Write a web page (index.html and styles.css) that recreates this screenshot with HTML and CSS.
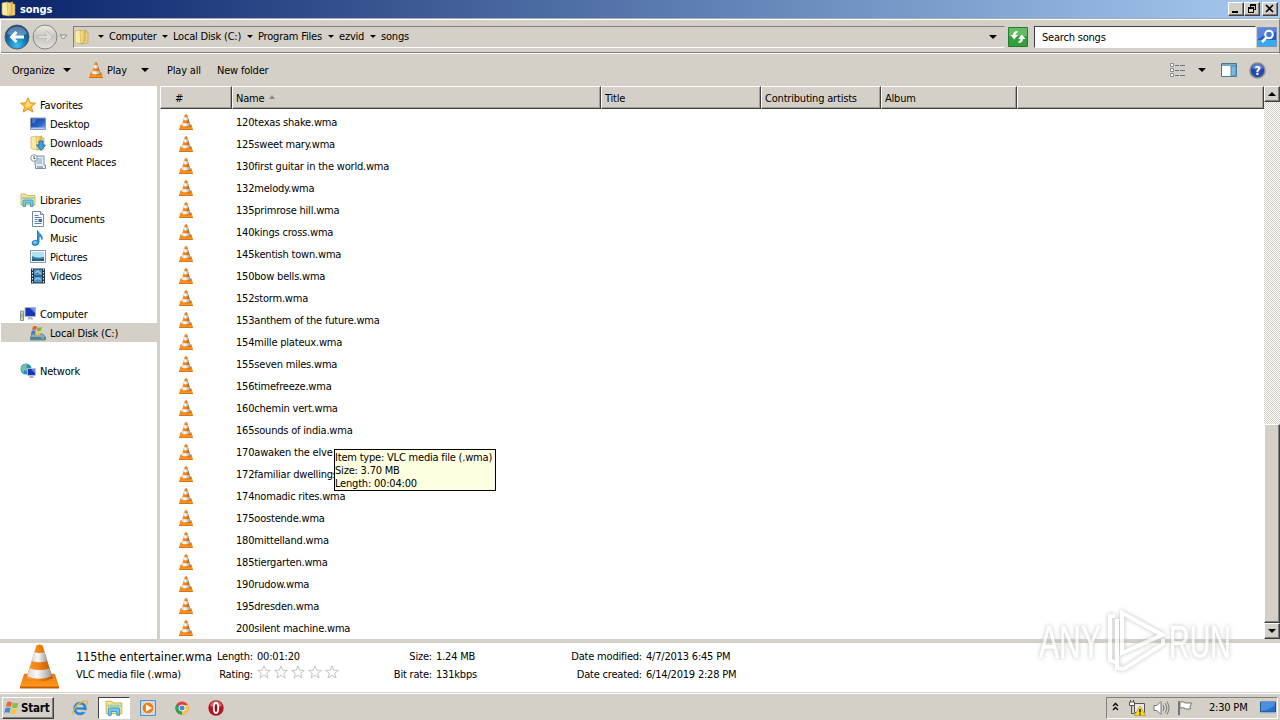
FILE: index.html
```html
<!DOCTYPE html>
<html lang="en">
<head>
<meta charset="utf-8">
<title>songs</title>
<link rel="stylesheet" href="styles.css">
</head>
<body>
<svg class="defs" aria-hidden="true">
  <defs>
    <linearGradient id="gCone" x1="0" x2="1"><stop offset="0" stop-color="#f79a3a"/><stop offset=".45" stop-color="#f58410"/><stop offset="1" stop-color="#b85206"/></linearGradient>
    <linearGradient id="gSlab" x1="0" x2="0" y2="1"><stop offset="0" stop-color="#e8780e"/><stop offset="1" stop-color="#ff9d1c"/></linearGradient>
    <linearGradient id="gWhite" x1="0" x2="1"><stop offset="0" stop-color="#d8d8d8"/><stop offset=".4" stop-color="#fafafa"/><stop offset="1" stop-color="#989898"/></linearGradient>
    <linearGradient id="gFolder" x1="0" x2="1"><stop offset="0" stop-color="#f8e894"/><stop offset="1" stop-color="#dcb550"/></linearGradient>
    <linearGradient id="gScreen" x1="0" x2="1" y2="1"><stop offset="0" stop-color="#1a3fa0"/><stop offset=".6" stop-color="#2a62c8"/><stop offset="1" stop-color="#7db4ee"/></linearGradient>
    <radialGradient id="gBack" cx=".5" cy=".85" r=".8"><stop offset="0" stop-color="#3bc3f2"/><stop offset=".5" stop-color="#1675b5"/><stop offset="1" stop-color="#123f78"/></radialGradient>
    <linearGradient id="gFwd" x2="0" y2="1"><stop offset="0" stop-color="#eceae6"/><stop offset=".5" stop-color="#c9c6c0"/><stop offset="1" stop-color="#e4e2de"/></linearGradient>
    <symbol id="cone" viewBox="0 0 38 44">
      <path d="M4 29h30l4 12v2H0v-2z" fill="url(#gSlab)"/><path d="M0 41.500h38v2H0z" fill="#c95b00"/>
      <path d="M16 1.500q3-2 6 0l10 32q-13 6-26 0z" fill="url(#gCone)"/>
      <path d="M13.900 8q5 1.500 10.200 0l2.600 8.500q-7.500 2.500-15.400 0z" fill="url(#gWhite)"/>
      <path d="M9.300 24q9.700 3 19.400 0l2.300 7.500q-12 5-24 0z" fill="url(#gWhite)"/>
    </symbol>
    <symbol id="folder" viewBox="0 0 16 16">
      <path d="M1 2l5-1 2 1v13l-6-1-1-1z" fill="#f9eca5" stroke="#c9a347" stroke-width=".6"/>
      <path d="M6 2l6-1v11l-5 3z" fill="url(#gFolder)" stroke="#c39d3e" stroke-width=".5"/><path d="M11 3h3v11l-6 1 3-3z" fill="#ecd27a" stroke="#b99334" stroke-width=".5"/>
    </symbol>
    <symbol id="star" viewBox="0 0 16 16"><path d="M8 .8l2.200 5 5.300.4-4 3.500 1.300 5.300L8 12.200 3.200 15l1.300-5.300-4-3.500 5.300-.4z" fill="#ffc037" stroke="#e5902a"/><path d="M8 3l1.400 3.800 2.600.3-3 2.400-4 .5 1-3z" fill="#ffe07a"/></symbol>
    <symbol id="desktop" viewBox="0 0 16 14"><path d="M.5 1h15v11.500H.5z" fill="url(#gScreen)" stroke="#8a9bb8"/><path d="M1 10.500h14V12H1z" fill="#b6cbe4"/><path d="M2 3h4M2 5h3" stroke="#6ea0e8"/></symbol>
    <symbol id="library" viewBox="0 0 16 16"><path d="M1 2h5l1 1.500h8V13H1z" fill="#f6e591" stroke="#cba84a" stroke-width=".8"/><path d="M2 5h13v2H2z" fill="#9ccfb3"/><path d="M3 14.500V9q0-1 1-1h8q1 0 1 1v5.500h-2.500V11h-5v3.500z" fill="#75c8ee" stroke="#2a91c8" stroke-width=".8"/></symbol>
    <symbol id="download" viewBox="0 0 16 16"><use href="#folder"/><path d="M9 6h4v4h2.500L11 15.500 6.500 10H9z" fill="#3aa0e4" stroke="#1766ad" stroke-width=".8"/></symbol>
    <symbol id="recent" viewBox="0 0 16 16"><path d="M5 2h9v9h1.500v3.500h-10V11H5z" fill="#e5edf2" stroke="#7d909e"/><path d="M6.500 5H12M6.500 7H12M6.500 9H12" stroke="#79a3c4"/><circle cx="4" cy="4" r="3.300" fill="#fff" stroke="#8397a5"/><path d="M4 2v2.500h1.500" fill="none" stroke="#456"/><path d="M7 12h6v2H7z" fill="#9db4c4"/></symbol>
    <symbol id="document" viewBox="0 0 16 16"><path d="M2.500.5h8l3 3v12h-11z" fill="#fff" stroke="#718aa5"/><path d="M10.500.5v3h3" fill="#cfdcea" stroke="#718aa5"/><path d="M4.500 4.500h4m-4 2h7m-7 2h3m-3 2h3m-3 2h7" stroke="#5d82ab"/><path d="M8.500 8h3.500v3H8.500z" fill="#3770a8"/></symbol>
    <symbol id="music" viewBox="0 0 16 16"><path d="M7.500.5c1 3 5.500 4 4.500 9-.5-3-2-3.500-3-3.500v6q0 3-3.500 3.500Q2 15.500 2 13t3.500-2.500q1 0 2 .5z" fill="#349fdc" stroke="#1b73b4" stroke-width=".9"/><ellipse cx="5" cy="12.500" rx="1.500" ry="1" fill="#a5def8"/></symbol>
    <symbol id="picture" viewBox="0 0 16 14"><path d="M.5.5h15v12H.5z" fill="#f8fbfd" stroke="#8496a5"/><path d="M2 2h12v9H2z" fill="#aee0f6"/><path d="M2 6q5 3 12 1v4H2z" fill="#2c8297"/><path d="M2 9q6 1 12-.5V11H2z" fill="#285882"/></symbol>
    <symbol id="video" viewBox="0 0 16 16"><path d="M1 .5h14v15H1z" fill="#25333e"/><path d="M4 1.500h8v6H4zM4 8.500h8v6H4z" fill="#4794cc"/><path d="M5 5l3-2 3 3M5 12l3-2 3 2" stroke="#8cc4dc" fill="none" stroke-width="1.500"/><path d="M2.500 1v14M13.500 1v14" stroke="#e8edf0" stroke-dasharray="1.500 1.500"/></symbol>
    <symbol id="computer" viewBox="0 0 16 16"><path d="M5 1.500h10.500v9H5z" fill="#1b36b2" stroke="#a9b5c8"/><path d="M10 2h5v5z" fill="#6f8ff0"/><path d="M8 11h4l1.500 2.500h-6z" fill="#b6bbc6"/><path d="M.5 5h3v9.500h-3z" fill="#cbd8c8" stroke="#8a978c"/><path d="M1.500 7.500h1v4h-1z" fill="#5aa653"/></symbol>
    <symbol id="disk" viewBox="0 0 16 16"><path d="M2 9h11l2.500 3v3H.5v-3z" fill="#8cacbb" stroke="#527284" stroke-width=".7"/><path d="M1 12h14v2.500H1z" fill="#507e92"/><path d="M11 13h3" stroke="#82e476"/><path d="M3 1.500q2-1 4 0L6 5q-2-1-4 0z" fill="#e85e2a"/><path d="M7.700 2q2 1 4.300 0l-1 3.500q-2 1-4.300 0z" fill="#75b53b"/><path d="M1.800 5.800q2-1 4 0l-1 3.500q-2-1-4 0z" fill="#3a7cd8"/><path d="M6.500 6.300q2 1 4.300 0l-1 3.500q-2 1-4.300 0z" fill="#f7c433"/></symbol>
    <symbol id="network" viewBox="0 0 16 16"><circle cx="6" cy="6" r="5.500" fill="#2b8bc6"/><path d="M2 3q3-3 6-2L6 4l2 2-2 2-2-1v3Q1 8 1 5z" fill="#71c4a1"/><path d="M7.500 5.500h8v7h-8z" fill="#1c35b5" stroke="#c0cce0" stroke-width=".8"/><path d="M11 6h4v4z" fill="#6789ea"/><path d="M9 15h5l-1-2h-3z" fill="#a4aeb9"/></symbol>
    <symbol id="flag" viewBox="0 0 16 16"><path d="M3 2.500q2.500-2 5-.3L7 7Q4.500 5.700 1.800 7z" fill="#ef6532"/><path d="M9 2.600q2.500 1.500 5.500-.2L13.300 7.200q-3 1.700-5.300.2z" fill="#83bf42"/><path d="M1.500 8Q4 6.800 6.700 8L5.500 13Q3 11.500.2 13z" fill="#3f8be0"/><path d="M7.700 8.500q2.500 1.400 5.300-.1l-1.200 4.800q-3 1.700-5.300.2z" fill="#fac631"/></symbol>
    <symbol id="rate" viewBox="0 0 14 14"><path d="M7 .8l1.700 4.400 4.700.2-3.700 3 1.300 4.600-4-2.700L3 13l1.300-4.600-3.700-3 4.700-.2z" fill="#fff" stroke="#c4c4c4"/></symbol>
  </defs>
</svg>

<div class="screen">
  <header class="titlebar">
    <svg class="i16"><use href="#folder"/></svg>
    <span class="title">songs</span>
    <div class="winbtns">
      <span class="wb"><svg viewBox="0 0 12 10"><path d="M2 7h6v2H2z"/></svg></span><span class="wb"><svg viewBox="0 0 12 10"><path d="M4 0h6v6H8V5h1V2H5v1H4zM2 3h6v6H2zM3 5v3h4V5z" fill-rule="evenodd"/></svg></span><span class="wb close"><svg viewBox="0 0 12 10"><path d="M2 1l7 7M9 1L2 8" stroke="#000" stroke-width="1.600"/></svg></span>
    </div>
  </header>

  <nav class="navbar">
    <svg class="back" viewBox="0 0 26 26"><circle cx="13" cy="13" r="12" fill="url(#gBack)" stroke="#51606e"/><path d="M3 10Q5 2.500 13 2.500T23 10q-10 4-20 0z" fill="#fff" opacity=".3"/><path d="M5.500 13l6-6 2 2-2.500 2.500h9v3h-9l2.500 2.500-2 2z" fill="#fff"/></svg>
    <svg class="fwd" viewBox="0 0 26 26"><circle cx="13" cy="13" r="12" fill="url(#gFwd)" stroke="#888580"/><path d="M20.500 13l-6-6-2 2 2.500 2.500H6v3h9L12.500 17l2 2z" fill="#dedcd8" stroke="#b3b0aa" stroke-width=".7"/></svg>
    <svg class="recentarrow" viewBox="0 0 9 6"><path d="M1 1h7L4.500 5z" fill="#eee" stroke="#888"/></svg>
    <div class="address">
      <svg class="i16"><use href="#folder"/></svg>
      <i class="tri t0"></i><span class="c1">Computer</span>
      <i class="tri"></i><span class="c2">Local Disk (C:)</span>
      <i class="tri"></i><span class="c3">Program Files</span>
      <i class="tri"></i><span class="c4">ezvid</span>
      <i class="tri"></i><span class="c5">songs</span>
      <i class="tri big end"></i>
    </div>
    <svg class="refresh" viewBox="0 0 20 20"><path d="M.5.5h19v19H.5z" fill="#32a03b" stroke="#237a30"/><path d="M1 1h18v8H1z" fill="#70c977" opacity=".7"/><path d="M9.500 4Q5 4 5 8H2.500l3.700 4.500L10 8H7.500q0-2 2-2zM10.500 16q4.500 0 4.500-4h2.500l-3.700-4.500L10 12h2.500q0 2-2 2z" fill="#fff"/></svg>
    <div class="search">Search songs</div>
    <svg class="go" viewBox="0 0 20 20"><path d="M.5.5h19v19H.5z" fill="#2858d0" stroke="#7193bd"/><path d="M1 13h18v6H1z" fill="#38a9ee"/><path d="M1 1h18v4Q10 6 1 12z" fill="#7195ea" opacity=".7"/><circle cx="12" cy="7.500" r="3.800" fill="#4178dc" stroke="#fff" stroke-width="2"/><path d="M9 11l-4 4" stroke="#fff" stroke-width="2.500"/></svg>
  </nav>

  <div class="toolbar">
    <span class="org">Organize</span><i class="tri big"></i>
    <svg class="i16 tbcone"><use href="#cone"/></svg><span class="play">Play</span><i class="tri big pt"></i>
    <span class="all">Play all</span><span>New folder</span>
    <div class="tbright">
      <svg width="16" height="14" viewBox="0 0 16 14"><path d="M.5.500h3v3h-3zM.5 5.500h3v3h-3zM.5 10.500h3v3h-3z" fill="#fff" stroke="#868b94"/><path d="M5 2.500h4m1 0h5M5 7.500h4m1 0h5M5 12.500h4m1 0h5" stroke="#68717c"/></svg>
      <i class="tri big"></i>
      <svg width="16" height="14" viewBox="0 0 16 14"><path d="M.5.5h15v13H.5z" fill="#fff" stroke="#427496"/><path d="M1 1h14v2H1z" fill="#7baac5"/><path d="M10 3h5v10h-5z" fill="#78b9dc" stroke="#4e87a8"/></svg>
      <svg width="17" height="17" viewBox="0 0 17 17"><circle cx="8.500" cy="8.500" r="7.500" fill="#2549b1" stroke="#858c9c" stroke-width="1.500"/><path d="M3 6q2-4 5.500-4T14 6q-5 3-11 0z" fill="#8ca9eb" opacity=".6"/><text x="8.500" y="13" text-anchor="middle" class="q">?</text></svg>
    </div>
  </div>

  <main class="main">
    <aside class="tree">
      <div class="n top"><svg class="i16"><use href="#star"/></svg><span>Favorites</span></div>
      <div class="n"><svg class="i16"><use href="#desktop"/></svg><span>Desktop</span></div>
      <div class="n"><svg class="i16"><use href="#download"/></svg><span>Downloads</span></div>
      <div class="n"><svg class="i16"><use href="#recent"/></svg><span>Recent Places</span></div>
      <div class="n top gap"><svg class="i16"><use href="#library"/></svg><span>Libraries</span></div>
      <div class="n"><svg class="i16"><use href="#document"/></svg><span>Documents</span></div>
      <div class="n"><svg class="i16"><use href="#music"/></svg><span>Music</span></div>
      <div class="n"><svg class="i16"><use href="#picture"/></svg><span>Pictures</span></div>
      <div class="n"><svg class="i16"><use href="#video"/></svg><span>Videos</span></div>
      <div class="n top gap"><svg class="i16"><use href="#computer"/></svg><span>Computer</span></div>
      <div class="n sel"><svg class="i16"><use href="#disk"/></svg><span>Local Disk (C:)</span></div>
      <div class="n top gap"><svg class="i16"><use href="#network"/></svg><span>Network</span></div>
    </aside>
    <section class="list">
      <div class="head"><span class="hnum">#</span><span>Name<svg class="sort" viewBox="0 0 6 4"><path d="M0 4h6L3 0z" fill="#8c8982"/></svg></span><span>Title</span><span>Contributing artists</span><span>Album</span><span></span></div>
      <div class="rows">
        <div class="r"><svg><use href="#cone"/></svg>120texas shake.wma</div>
        <div class="r"><svg><use href="#cone"/></svg>125sweet mary.wma</div>
        <div class="r"><svg><use href="#cone"/></svg>130first guitar in the world.wma</div>
        <div class="r"><svg><use href="#cone"/></svg>132melody.wma</div>
        <div class="r"><svg><use href="#cone"/></svg>135primrose hill.wma</div>
        <div class="r"><svg><use href="#cone"/></svg>140kings cross.wma</div>
        <div class="r"><svg><use href="#cone"/></svg>145kentish town.wma</div>
        <div class="r"><svg><use href="#cone"/></svg>150bow bells.wma</div>
        <div class="r"><svg><use href="#cone"/></svg>152storm.wma</div>
        <div class="r"><svg><use href="#cone"/></svg>153anthem of the future.wma</div>
        <div class="r"><svg><use href="#cone"/></svg>154mille plateux.wma</div>
        <div class="r"><svg><use href="#cone"/></svg>155seven miles.wma</div>
        <div class="r"><svg><use href="#cone"/></svg>156timefreeze.wma</div>
        <div class="r"><svg><use href="#cone"/></svg>160chemin vert.wma</div>
        <div class="r"><svg><use href="#cone"/></svg>165sounds of india.wma</div>
        <div class="r"><svg><use href="#cone"/></svg>170awaken the elve</div>
        <div class="r"><svg><use href="#cone"/></svg>172familiar dwellings</div>
        <div class="r"><svg><use href="#cone"/></svg>174nomadic rites.wma</div>
        <div class="r"><svg><use href="#cone"/></svg>175oostende.wma</div>
        <div class="r"><svg><use href="#cone"/></svg>180mittelland.wma</div>
        <div class="r"><svg><use href="#cone"/></svg>185tiergarten.wma</div>
        <div class="r"><svg><use href="#cone"/></svg>190rudow.wma</div>
        <div class="r"><svg><use href="#cone"/></svg>195dresden.wma</div>
        <div class="r"><svg><use href="#cone"/></svg>200silent machine.wma</div>
      </div>
      <div class="tip">Item type: VLC media file (.wma)<br>Size: 3.70 MB<br>Length: 00:04:00</div>
    </section>
    <div class="scroll">
      <div class="sb"><i class="up"></i></div>
      <div class="track"></div>
      <div class="thumb"></div>
      <div class="sb"><i class="down"></i></div>
    </div>
  </main>

  <section class="details">
    <svg class="bigcone"><use href="#cone"/></svg>
    <div class="info">
      <span class="fname">115the entertainer.wma</span><span class="l">Length:</span><span>00:01:20</span><span class="l">Size:</span><span>1.24 MB</span><span class="l">Date modified:</span><span>4/7/2013 6:45 PM</span>
      <span>VLC media file (.wma)</span><span class="l">Rating:</span><span class="stars"><svg><use href="#rate"/></svg><svg><use href="#rate"/></svg><svg><use href="#rate"/></svg><svg><use href="#rate"/></svg><svg><use href="#rate"/></svg></span><span class="l">Bit rate:</span><span>131kbps</span><span class="l">Date created:</span><span>6/14/2019 2:28 PM</span>
    </div>
  </section>

  <footer class="taskbar">
    <div class="start"><svg class="i16"><use href="#flag"/></svg>Start</div>
    <div class="apps">
      <span><svg class="i16" viewBox="0 0 16 16"><circle cx="8" cy="8.500" r="5.300" fill="none" stroke="#2787d5" stroke-width="2.800"/><path d="M4 8.500h9" stroke="#2787d5" stroke-width="2.300"/><path d="M11 10.200h5v2h-5z" fill="#d4d0c8"/><path d="M2 14Q-1 14 3 8t10-7q4-1 1.500 4" fill="none" stroke="#e4b63e" stroke-width="1.300"/></svg></span>
      <span class="active"><svg class="i18"><use href="#library"/></svg></span>
      <span><svg class="i16" viewBox="0 0 16 16"><path d="M.5.5h15v15H.5z" fill="#b7dcf5" stroke="#5591c8"/><circle cx="8" cy="8" r="6" fill="#f08118" stroke="#fff4e0" stroke-width=".8"/><path d="M6 4.500v7L12 8z" fill="#fff"/></svg></span>
      <span><svg class="i14" viewBox="0 0 16 16"><circle cx="8" cy="8" r="7.500" fill="#e14236"/><path d="M8 8L1.500 4.200A7.500 7.500 0 0 0 8 15.500l3.500-6z" fill="#2fa350"/><path d="M8 8l0 7.500A7.500 7.500 0 0 0 14.700 4.600H8z" fill="#f9cd35"/><circle cx="8" cy="8" r="3.500" fill="#4585ee" stroke="#fff"/></svg></span>
      <span><svg class="i16" viewBox="0 0 16 16"><circle cx="8" cy="8" r="7.700" fill="#b51620"/><path d="M2 6q2-5 6-5t6 5q-6 2-12 0z" fill="#e66b6d"/><ellipse cx="8" cy="8" rx="2.200" ry="5" fill="#8e1119" stroke="#fff" stroke-width="1.800"/></svg></span>
    </div>
    <div class="tray">
      <svg class="chev" viewBox="0 0 7 9"><path d="M1 4l2.500-2.500L6 4M1 8l2.500-2.500L6 8" fill="none" stroke="#000" stroke-width="1.300"/></svg>
      <svg class="net" viewBox="0 0 17 16"><path d="M5.500 3.500h10v9h-10z" fill="#e9e7e2" stroke="#555"/><path d="M.5 2h5v3.500h-5z" fill="#fff" stroke="#555"/><path d="M1.500 0v2M4.500 0v2" stroke="#555"/><path d="M2.500 5.500v8h3" fill="none" stroke="#555"/><path d="M11 6l5.500 9.500h-11z" fill="#ffdc1f" stroke="#b59310" stroke-width=".7"/><path d="M11 9v3.500m0 1v1.200" stroke="#000" stroke-width="1.400"/></svg>
      <svg class="vol" viewBox="0 0 17 16"><path d="M1 5.500h3L8 1.500v13l-4-4H1z" fill="#fff" stroke="#777"/><path d="M10 5q2 3 0 6M12 3q3.500 5 0 10M14 1.500q4 6.500 0 13" fill="none" stroke="#777"/></svg>
      <svg class="act" viewBox="0 0 17 16"><path d="M2.500 1.500V15h-1V1.500zM3 2q3-1 5.500 1H15l-2 3 .5 3H9q-2.500-2-6-1z" fill="#fff" stroke="#777"/></svg>
      <span class="clock">2:30 PM</span>
      <svg class="show" viewBox="0 0 16 14"><path d="M.5 1h15v10H.5z" fill="#2770cc" stroke="#24508d"/><path d="M1 10q8-1 14-6V1H1z" fill="#4b90e0"/><path d="M0 11.500h16V13H0z" fill="#b1c7dc"/></svg>
    </div>
  </footer>

  <svg class="mark" viewBox="0 0 220 72">
    <g class="markshape">
      <text x="4" y="55" textLength="62" lengthAdjust="spacingAndGlyphs">ANY</text>
      <text x="134" y="55" textLength="62" lengthAdjust="spacingAndGlyphs">RUN</text>
      <path d="M87 10v40l40-18zM87 10l41 22M80 13h-5v44l7 3M82 16v49l7 1 39-25v-5"/>
    </g>
  </svg>
</div>
</body>
</html>
```

FILE: styles.css
```css
* { box-sizing: border-box; }
body {
  margin: 0;
  font-family: "DejaVu Sans Condensed", "DejaVu Sans", sans-serif;
  font-stretch: condensed;
  font-size: 11px;
  letter-spacing: -0.2px;
  color: #000;
  white-space: nowrap;
}
svg { display: block; flex: none; }
.defs { position: absolute; width: 0; height: 0; }
.i14 { width: 14px; height: 14px; }
.i16 { width: 16px; height: 16px; }
.i18 { width: 18px; height: 18px; }
.screen {
  position: relative;
  display: flex;
  flex-direction: column;
  width: 1280px;
  height: 720px;
  overflow: hidden;
  background: #d4d0c8;
}
.tri {
  width: 0;
  height: 0;
  flex: none;
  border: 3px solid transparent;
  border-top-color: #000;
  border-bottom: 0;
}
.tri.big { border-width: 4px 4px 0; }

.titlebar {
  display: flex;
  align-items: center;
  height: 18px;
  padding: 0 2px 0 1px;
  background: linear-gradient(90deg, #0a246a, #a6caf0);
}
.title { margin-left: 3px; color: #fff; font-weight: bold; font-size: 11px; letter-spacing: -0.1px; }
.winbtns { display: flex; margin-left: auto; }
.wb {
  width: 16px;
  height: 14px;
  padding: 1px;
  background: #d4d0c8;
  border: 1px solid;
  border-color: #fff #404040 #404040 #fff;
  box-shadow: inset -1px -1px #808080;
}
.wb svg { width: 12px; height: 10px; }
.wb.close { margin-left: 2px; }

.navbar {
  display: flex;
  align-items: center;
  height: 36px;
  padding: 1px 2px 0 3px;
  border: 1px solid;
  border-color: #808080 #808080 #fff #fff;
  border-top: 2px groove #fff;
  box-shadow: inset 0 -1px #808080;
}
.back, .fwd { width: 26px; height: 26px; }
.fwd { margin-left: 2px; }
.recentarrow { width: 9px; height: 6px; margin-left: 1px; }
.address {
  display: flex;
  align-items: center;
  width: 932px;
  height: 22px;
  margin-left: 5px;
  padding-bottom: 1px;
  border: 1px solid;
  border-color: #808080 #d4d0c8 #fff #808080;
}
.address .tri { margin-right: 5px; }
.address .t0 { margin-left: 8px; }
.address .end { margin: 0 7px 0 auto; }
.c1 { width: 53px; }
.c2 { width: 74px; }
.c3 { width: 70px; }
.c4 { width: 31px; }
.address .i16 { height: 18px; }
.refresh { width: 20px; height: 20px; margin-left: 3px; }
.search {
  width: 222px;
  height: 22px;
  margin-left: 6px;
  padding: 1px 0 0 7px;
  line-height: 20px;
  background: #fff;
  border: 1px solid;
  border-color: #404040 #fff #fff #404040;
}
.go { width: 20px; height: 20px; margin-left: 1px; }

.toolbar {
  display: flex;
  align-items: center;
  height: 32px;
  padding: 0 14px 0 12px;
}
.org { width: 51px; }
.tbcone { margin-left: 17px; }
.play { width: 34px; margin-left: 3px; }
.all { width: 50px; }
.pt { margin-right: 18px; }
.tbright { display: flex; align-items: center; gap: 12px; margin-left: auto; }
.tbright svg:nth-of-type(2) { margin-left: 3px; }
.q { fill: #fff; font-size: 12px; font-weight: bold; }

.main { display: flex; height: 553px; }
.tree { width: 160px; padding-top: 9px; background: #fff; border-right: 3px solid #d4d0c8; }
.n { display: flex; align-items: center; gap: 4px; height: 19px; padding-left: 30px; }
.n span { padding-top: 2px; }
.n.top { padding-left: 20px; }
.n.gap { margin-top: 19px; }
.n.sel { margin-left: 1px; padding-left: 29px; background: #d4d0c8; }
.list { position: relative; width: 1104px; background: #fff; overflow: hidden; }
.head { display: grid; grid-template-columns: 72px 369px 160px 120px 136px 247px; height: 23px; }
.head span {
  display: flex;
  align-items: center;
  padding: 1px 0 0 3px;
  background: #d4d0c8;
  border: 1px solid;
  border-color: #fff #404040 #404040 #fff;
  box-shadow: inset -1px -1px #a09d96;
}
.head .hnum { padding-left: 14px; }
.sort { width: 6px; height: 4px; margin: -3px 0 0 5px; }
.rows { padding-top: 2px; }
.r { display: flex; align-items: center; height: 22px; padding-left: 18px; }
.r svg { width: 16px; height: 16px; margin-right: 42px; margin-top: -1px; }
.tip {
  position: absolute;
  left: 174px;
  top: 363px;
  width: 162px;
  height: 42px;
  padding: 1px 0 0;
  line-height: 13px;
  background: #ffffe1;
  border: 1px solid #000;
}
.scroll { display: flex; flex-direction: column; width: 16px; }
.sb, .thumb {
  background: #d4d0c8;
  border: 1px solid;
  border-color: #fff #404040 #404040 #fff;
  box-shadow: inset -1px -1px #808080;
}
.sb { display: grid; place-items: center; height: 16px; }
.track { height: 322px; background: repeating-conic-gradient(#fff 0 25%, #d4d0c8 0 50%) 0 0 / 2px 2px; }
.thumb { flex: 1; }
.up, .down { width: 0; height: 0; border: 4px solid transparent; }
.up { border-top: 0; border-bottom-color: #000; }
.down { border-bottom: 0; border-top-color: #000; }

.details {
  display: flex;
  height: 53px;
  padding-left: 20px;
  background: #fff;
  border-top: 4px solid #d4d0c8;
}
.bigcone { width: 39px; height: 45px; margin-top: 1px; }
.info {
  display: grid;
  grid-template-columns: 136px 41px 131px 48px 132px 78px 120px;
  grid-template-rows: 18px 18px;
  align-items: center;
  height: 36px;
  margin: 4px 0 0 17px;
}
.info .l { text-align: right; padding-right: 4px; margin-right: -4px; }
.info .l + span { padding-left: 4px; }
.fname { font-size: 12.500px; letter-spacing: 0; }
.info .stars { display: flex; gap: 3px; padding-left: 5px; }
.stars svg { width: 14px; height: 14px; margin-top: -4px; }

.taskbar {
  display: flex;
  align-items: center;
  height: 28px;
  padding: 2px 2px 0;
  border-top: 1px solid #d4d0c8;
  box-shadow: inset 0 1px #fff;
}
.start {
  display: flex;
  align-items: center;
  gap: 1px;
  width: 52px;
  height: 22px;
  padding-left: 1px;
  font-weight: bold;
  font-size: 11.500px;
  border: 1px solid;
  border-color: #fff #404040 #404040 #fff;
  box-shadow: inset -1px -1px #808080;
}
.apps { display: flex; margin-left: 10px; gap: 2px; }
.apps span { display: grid; place-items: center; width: 32px; height: 22px; }
.apps .active { background: #fff; border: 1px solid; border-color: #404040 #fff #fff #404040; }
.tray {
  display: flex;
  align-items: center;
  width: 172px;
  height: 22px;
  margin-left: auto;
  padding-left: 5px;
  border: 1px solid;
  border-color: #808080 #fff #fff #808080;
}
.chev { width: 7px; height: 9px; margin-top: -2px; }
.net, .vol, .act { width: 17px; height: 16px; }
.net { margin-left: 10px; }
.vol, .act { margin-left: 7px; }
.clock { width: 40px; margin-left: 15px; }
.show { width: 16px; height: 14px; margin-left: 11px; }

.mark { position: absolute; left: 1035px; top: 603px; width: 220px; height: 72px; }
.markshape {
  fill: #fff;
  stroke: #fff;
  stroke-width: 0.5;
  font-family: "Liberation Sans", sans-serif;
  font-size: 47px;
  letter-spacing: 0;
  opacity: 0.75;
  filter: drop-shadow(0 0 2px #aaa);
}
.markshape path { fill: none; stroke-width: 4; }
```
